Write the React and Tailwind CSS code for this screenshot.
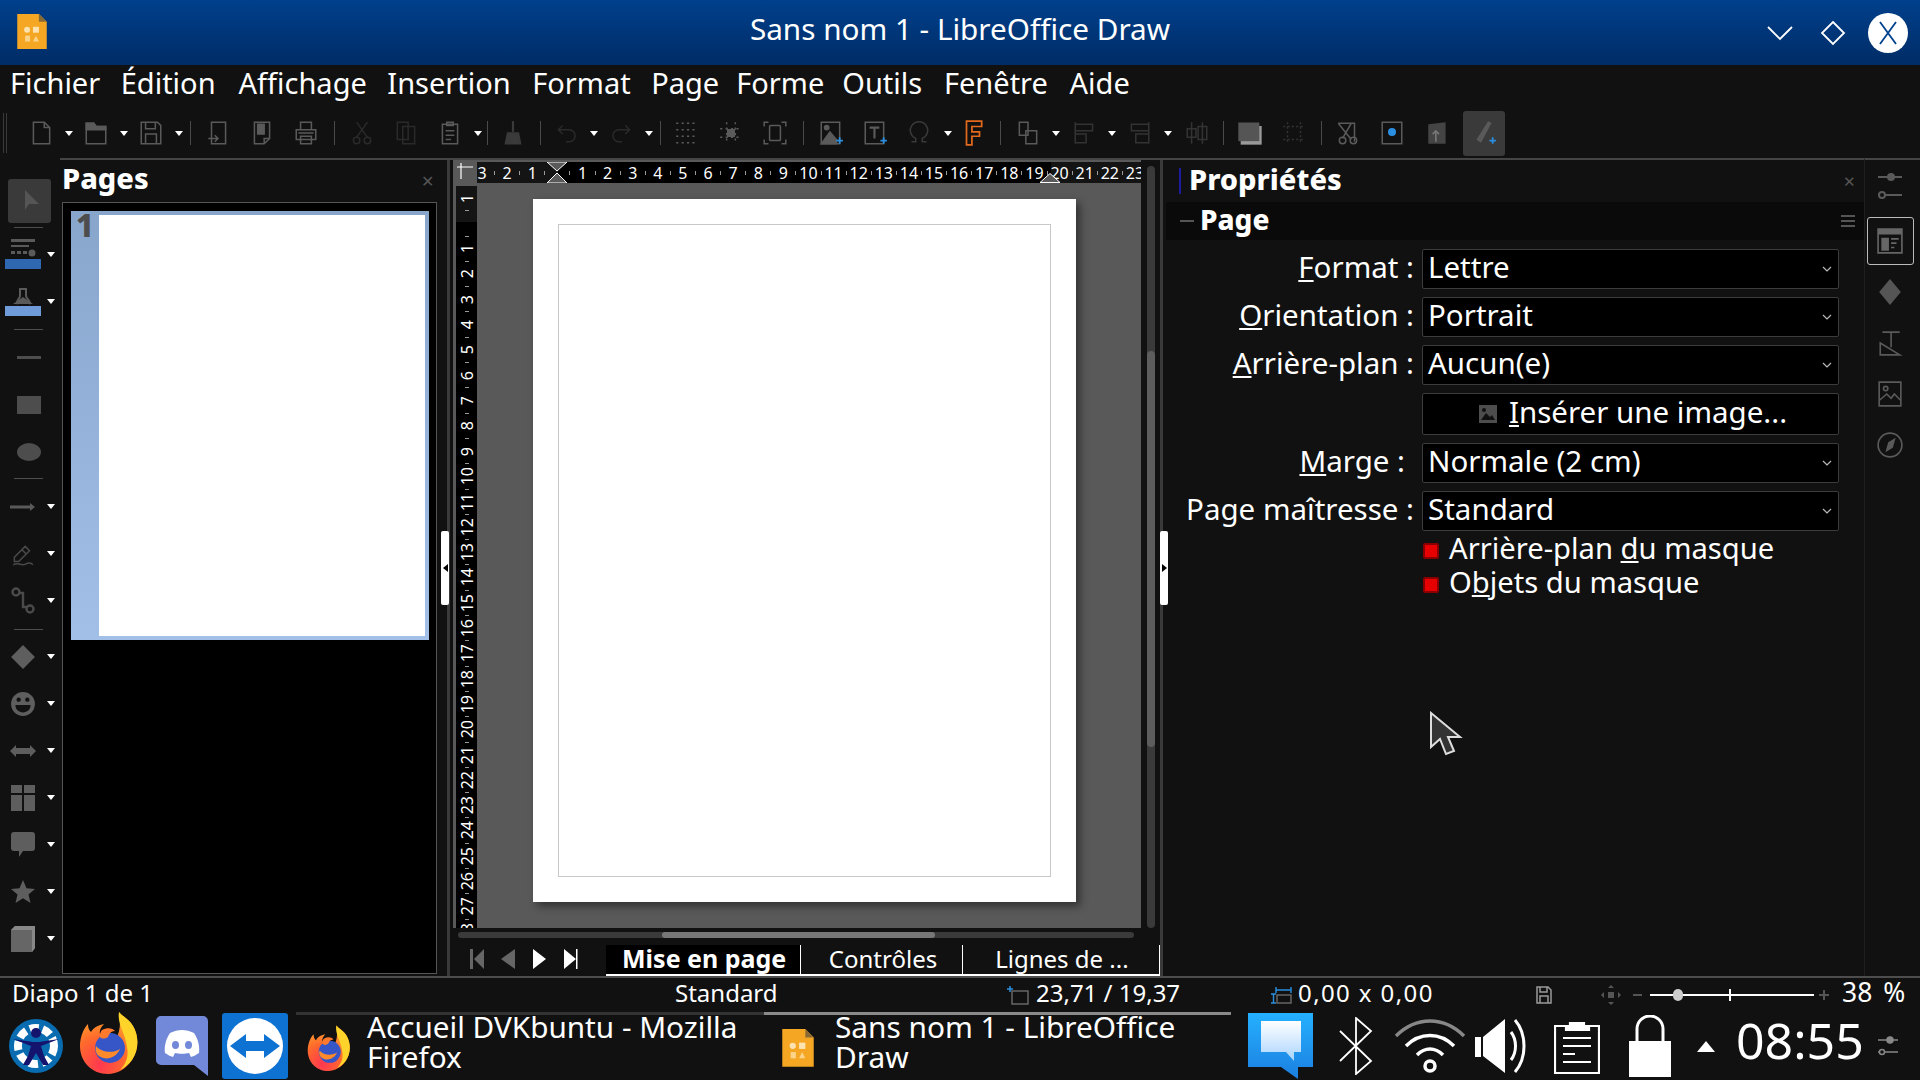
import React from 'react';

const DIM = '#5a5a5a';

// small helper for all the greyed out LibreOffice icons
const Ico = ({ w = 26, h = 26, children, c = DIM }) => (
  <svg width={w} height={h} viewBox="0 0 24 24" fill="none" stroke={c} strokeWidth="1.4">
    {children}
  </svg>
);

const Caret = ({ className = 'w-[11px]' }) => (
  <div className={`${className} flex justify-center shrink-0`}>
    <div className="w-0 h-0 border-l-[4px] border-r-[4px] border-t-[5px] border-l-transparent border-r-transparent border-t-white" />
  </div>
);

const Sep = ({ className = 'w-[12px]' }) => (
  <div className={`${className} flex justify-center shrink-0`}>
    <div className="w-px h-6 bg-[#4a4a4a]" />
  </div>
);

const Tool = ({ className = 'w-11', children }) => (
  <div className={`${className} flex justify-center items-center shrink-0`}>{children}</div>
);

const Plus = () => <path d="M17 19h6M20 16v6" stroke="#2a8fe0" strokeWidth="1.6" />;

const DrawLogo = ({ size = 32 }) => (
  <svg width={size} height={size * 1.18} viewBox="0 0 30 36">
    <path d="M0 0h22l8 8v28H0z" fill="#f5a623" />
    <path d="M22 0l8 8h-8z" fill="#8a6a33" />
    <rect x="7" y="13" width="6" height="6" rx="3" fill="#fde3b0" />
    <rect x="16" y="13" width="6" height="6" fill="#fde3b0" />
    <rect x="8" y="22" width="5" height="6" fill="#fbd48a" />
    <path d="M19 22l3 6h-6z" fill="#fbd48a" />
  </svg>
);

const Firefox = ({ size = 60, id = 'a' }) => (
  <svg width={size} height={size * 1.1} viewBox="0 0 60 66">
    <defs>
      <radialGradient id={`ff${id}`} cx="0.35" cy="0.85" r="0.9">
        <stop offset="0" stopColor="#ff3750" />
        <stop offset="0.5" stopColor="#ff6a2c" />
        <stop offset="1" stopColor="#ffb52c" />
      </radialGradient>
    </defs>
    <path d="M40 2c4 5 10 7 14 14 6 10 6 24-1 34-6 9-15 14-24 14C13 64 1 52 1 36c0-8 3-17 8-22 0 4 1 6 3 8 3-5 8-7 13-8-3 3-5 7-4 10 6-2 14 0 16 5 4-7 5-16 3-27z" fill={`url(#ff${id})`} />
    <path d="M40 2c4 5 10 7 14 14 6 10 6 24-1 34-3 4-8 8-12 10 6-6 9-14 7-23C46 22 38 14 40 2z" fill="#ffd42a" />
    <ellipse cx="31" cy="38" rx="15" ry="15" fill="#3656c8" />
    <path d="M17 36c5 6 16 8 24 3-4 9-14 12-21 7-3-2-4-6-3-10z" fill="#ff8a2c" />
    <path d="M23 20c5-3 11-2 13 1-4 0-6 3-7 6-3 2-6 2-8 0 0-3 0-5 2-7z" fill="#ff7a2c" />
  </svg>
);

// left margins differ per item, the hinted menu font doesn't space evenly
const menus = [
  ['Fichier', 'ml-0'],
  ['Édition', 'ml-[20.5px]'],
  ['Affichage', 'ml-[23px]'],
  ['Insertion', 'ml-[20.5px]'],
  ['Format', 'ml-[21.5px]'],
  ['Page', 'ml-[20.5px]'],
  ['Forme', 'ml-[17px]'],
  ['Outils', 'ml-[18px]'],
  ['Fenêtre', 'ml-[21.8px]'],
  ['Aide', 'ml-[21.7px]'],
];

const TitleBar = () => (
  <div className="h-[65px] shrink-0 flex items-center bg-gradient-to-b from-[#00408c] to-[#002c66] relative">
    <div className="pl-[17px] -mt-[2px]"><DrawLogo size={30} /></div>
    <div className="absolute left-0 right-0 text-center text-white text-[29.7px] leading-none -mt-[7px]">
      Sans nom 1 - LibreOffice Draw
    </div>
    <div className="ml-auto flex items-center pr-[12px]">
      <svg width="26" height="16" viewBox="0 0 26 16" fill="none" stroke="white" strokeWidth="1.8"><path d="M1 2l12 12L25 2" /></svg>
      <svg className="ml-[27px]" width="26" height="26" viewBox="0 0 26 26" fill="none" stroke="white" strokeWidth="1.8"><path d="M13 2l11 11-11 11L2 13z" /></svg>
      <div className="ml-[22px] w-[40px] h-[40px] rounded-full bg-white flex items-center justify-center">
        <svg width="24" height="26" viewBox="0 0 24 26" fill="none" stroke="#00408c" strokeWidth="1.8"><path d="M4 2l16 22M20 2L4 24" /></svg>
      </div>
    </div>
  </div>
);

const MenuBar = () => (
  <div className="h-[40px] shrink-0 flex items-center pl-[10px] text-white text-[29px] leading-none">
    {menus.map(([m, ml]) => <span key={m} className={`${ml} -mt-[6px]`}>{m}</span>)}
  </div>
);

const Toolbar = () => (
  <div className="h-[53px] shrink-0 flex items-center pt-[3px]">
    <div className="w-[19px] shrink-0 flex justify-start pl-[3px] gap-[2px]">
      <div className="w-px h-10 bg-[#3a3a3a]" /><div className="w-px h-10 bg-[#3a3a3a]" />
    </div>
    <Tool><Ico><path d="M5 2h10l5 5v15H5z" /><path d="M15 2v5h5" /></Ico></Tool>
    <Caret />
    <Tool><Ico><path d="M3 22V3h7l2 3h9v16z" /><path d="M3 3h7l2 3h9v3H3z" fill={DIM} /></Ico></Tool>
    <Caret />
    <Tool><Ico><path d="M3 2h15l3 3v17H3z" /><path d="M7 2v6h9V2M7 22v-9h10v9" /></Ico></Tool>
    <Caret />
    <Sep />
    <Tool><Ico><path d="M6 2h13v20H6z" /><path d="M3 17h9m-3-3l3 3-3 3" /></Ico></Tool>
    <Tool><Ico><path d="M5 2h14v15l-5 5H5z" /><path d="M8 4h6v9H8z" fill={DIM} /><path d="M14 22v-5h5" /></Ico></Tool>
    <Tool><Ico><path d="M7 2h10v7H7zM3 9h18v9H3zM7 15h10v7H7z" /><path d="M5 12h14" /></Ico></Tool>
    <Sep />
    <Tool><Ico c="#2a2a2a"><path d="M7 2l10 14M17 2L7 16" /><circle cx="7" cy="19" r="3" /><circle cx="17" cy="19" r="3" /></Ico></Tool>
    <Tool><Ico c="#2a2a2a"><path d="M4 2h10v16H4zM9 6h11v16H9z" /></Ico></Tool>
    <Tool><Ico><path d="M5 4h14v18H5z" /><path d="M9 2h6v3H9zM8 10h8M8 14h8M8 18h5" /></Ico></Tool>
    <Caret />
    <Sep className="w-[8px]" />
    <Tool><Ico c="#3a3a3a"><path d="M12 1v10" strokeWidth="2" /><path d="M7 12h10l2 10H5z" fill="#3a3a3a" /></Ico></Tool>
    <Sep className="w-[10px]" />
    <Tool><Ico c="#2a2a2a"><path d="M8 5L4 9l4 4M4 9h10a5 5 0 010 11h-3" /></Ico></Tool>
    <Caret className="w-[10px]" />
    <Tool><Ico c="#2a2a2a"><path d="M16 5l4 4-4 4M20 9H10a5 5 0 000 11h3" /></Ico></Tool>
    <Caret className="w-[12px]" />
    <Sep className="w-[10px]" />
    <Tool><Ico><path d="M2 3h20M2 9h20M2 15h20M2 21h20" strokeDasharray="2 3" /></Ico></Tool>
    <Tool><Ico><path d="M8 2v20M16 2v20M2 8h20M2 16h20" strokeDasharray="2 3" /><rect x="9" y="9" width="6" height="6" fill={DIM} /></Ico></Tool>
    <Tool><Ico><path d="M2 6V2h4M18 2h4v4M22 18v4h-4M6 22H2v-4" /><rect x="7" y="5" width="10" height="14" rx="1" /></Ico></Tool>
    <Sep />
    <Tool><Ico><path d="M3 2h17v20H3z" /><path d="M3 22l8-11 6 7v4z" fill={DIM} /><circle cx="8" cy="7" r="2" fill={DIM} /><Plus /></Ico></Tool>
    <Tool><Ico><path d="M3 2h17v20H3z" /><path d="M7 7h9M11.5 7v10" strokeWidth="2" /><Plus /></Ico></Tool>
    <Tool><Ico c="#3a3a3a"><path d="M5 20h4v-3a8 8 0 116 0v3h4" /></Ico></Tool>
    <Caret className="w-[14px]" />
    <Tool className="w-[36px]"><Ico c="#e36a1c"><path d="M6 1h14v5H11v5h7v4h-7v8H6z" strokeWidth="1.6" /></Ico></Tool>
    <Sep className="w-[18px]" />
    <Tool className="w-[38px]"><Ico><path d="M4 2h8v12H4zM10 10h10v12H10z" /></Ico></Tool>
    <Caret className="w-[18px]" />
    <Tool className="w-[40px]"><Ico c="#333"><path d="M3 2v20M3 4h16v6H3M3 13h10v8H3" /></Ico></Tool>
    <Caret className="w-[14px]" />
    <Tool className="w-[40px]"><Ico c="#333"><path d="M21 2v20M21 4H5v6h16M21 13H9v8h12" /></Ico></Tool>
    <Caret className="w-[18px]" />
    <Tool className="w-[40px]"><Ico c="#333"><path d="M7 2v20M17 2v20M3 8h8v8H3zM13 6h8v12h-8z" /></Ico></Tool>
    <Sep />
    <Tool className="w-[42px]"><svg width="28" height="28" viewBox="0 0 24 24"><rect x="4" y="6" width="18" height="16" fill="#999" /><rect x="2" y="3" width="18" height="16" fill="#555" /></svg></Tool>
    <Tool className="w-[46px]"><Ico c="#333"><path d="M6 2v20M18 2v20M2 6h20M2 18h20" strokeDasharray="2 2" /></Ico></Tool>
    <Sep className="w-[8px]" />
    <Tool className="w-[46px]"><Ico><path d="M3 3h15v17M3 3l12 15M15 3l-8 14" /><circle cx="7" cy="19" r="3" /><circle cx="17" cy="19" r="3" /></Ico></Tool>
    <Tool className="w-[42px]"><Ico><path d="M3 2h18v20H3z" /><circle cx="12" cy="11" r="3" fill="#2a8fe0" stroke="#2a8fe0" /></Ico></Tool>
    <Tool className="w-[50px]"><svg width="26" height="26" viewBox="0 0 24 24"><path d="M3 4l16-2v20H3z" fill="#444" /><path d="M10 20v-9M7 13l3-3 3 3" stroke="#777" fill="none" strokeWidth="1.5" /></svg></Tool>
    <div className="w-[42px] h-[45px] rounded-[3px] bg-[#3a3a3a] flex justify-center items-center">
      <Ico><path d="M6 18L16 2l2 1L9 20z" fill={DIM} /><Plus /></Ico>
    </div>
  </div>
);

const LeftSep = () => (
  <div className="w-[60px] flex justify-center -ml-[2px]"><div className="w-[29px] h-px bg-[#4d4d4d]" /></div>
);

const LeftTool = ({ children, caret = true }) => (
  <div className="h-[47px] w-[60px] flex items-center">
    <div className="w-[46px] flex justify-center">{children}</div>
    {caret && <Caret className="w-[10px]" />}
  </div>
);

const LeftToolbar = () => (
  <div className="w-[60px] shrink-0 flex flex-col pt-[21px]">
    <div className="ml-[8px] w-[43px] h-[44px] rounded-[3px] bg-[#3a3a3a] flex items-center justify-center">
      <svg width="22" height="26" viewBox="0 0 22 26"><path d="M6 2l14 14H10l-4 6z" fill="#555" /></svg>
    </div>
    <div className="h-[4px]" /><LeftSep /><div className="h-[3px]" />
    <LeftTool>
      <svg width="36" height="32" viewBox="0 0 36 32" fill={DIM}><rect x="6" y="0" width="24" height="3" /><rect x="6" y="6" width="18" height="2" /><rect x="6" y="12" width="4" height="3" /><rect x="12" y="12" width="4" height="3" /><rect x="18" y="12" width="4" height="3" /><circle cx="27" cy="14" r="3.5" /><rect x="0" y="20" width="36" height="10" fill="#2f67b0" /></svg>
    </LeftTool>
    <LeftTool>
      <svg width="36" height="32" viewBox="0 0 36 32"><path d="M13 18c-3-3 2-5 2-8V3h6v7c0 3 6 5 3 8" fill="none" stroke={DIM} strokeWidth="2" /><path d="M8 18l10-7 10 7z" fill={DIM} /><rect x="0" y="20" width="36" height="10" fill="#6f9cd8" /></svg>
    </LeftTool>
    <div className="h-[4px]" /><LeftSep /><div className="h-[4px]" />
    <LeftTool caret={false}><div className="w-[24px] h-[3px] bg-[#4d4d4d] ml-[12px]" /></LeftTool>
    <LeftTool caret={false}><div className="w-[24px] h-[18px] bg-[#4d4d4d] ml-[12px]" /></LeftTool>
    <LeftTool caret={false}><div className="w-[24px] h-[18px] rounded-[50%] bg-[#4d4d4d] ml-[12px]" /></LeftTool>
    <div className="h-[3px]" /><LeftSep /><div className="h-[4px]" />
    <LeftTool><svg width="26" height="10" viewBox="0 0 26 10"><path d="M0 5h22" stroke={DIM} strokeWidth="3" /><path d="M20 1l5 4-5 4z" fill={DIM} /></svg></LeftTool>
    <LeftTool><Ico c="#4a4a4a"><path d="M4 15L14 5l4 4L8 19H4zM3 22c5-3 8 2 12-1 2-1 5-1 6 1" /><path d="M11 8l4 4" /></Ico></LeftTool>
    <LeftTool><svg width="26" height="28" viewBox="0 0 26 28" fill="none" stroke="#4a4a4a" strokeWidth="2.4"><circle cx="6" cy="5" r="3.5" /><circle cx="20" cy="22" r="3.5" /><path d="M9 6h4v14h4" /></svg></LeftTool>
    <div className="h-[5px]" /><LeftSep /><div className="h-[3px]" />
    <LeftTool><svg width="26" height="26" viewBox="0 0 24 24"><path d="M12 1l11 11-11 11L1 12z" fill="#5e5e5e" /></svg></LeftTool>
    <LeftTool><svg width="26" height="26" viewBox="0 0 24 24"><circle cx="12" cy="12" r="11" fill="#5e5e5e" /><circle cx="8" cy="8" r="2" fill="#111" /><circle cx="16" cy="8" r="2" fill="#111" /><path d="M5 13h14c0 9-14 9-14 0z" fill="#111" /></svg></LeftTool>
    <LeftTool><svg width="26" height="14" viewBox="0 0 26 14"><path d="M0 7l6-6v3h14V1l6 6-6 6v-3H6v3z" fill="#5e5e5e" /></svg></LeftTool>
    <LeftTool><svg width="24" height="26" viewBox="0 0 24 26" fill="#5e5e5e"><rect width="11" height="8" /><rect x="13" width="11" height="8" /><rect y="10" width="11" height="16" /><rect x="13" y="10" width="11" height="16" /></svg></LeftTool>
    <LeftTool><svg width="24" height="26" viewBox="0 0 24 26"><path d="M3 0h18a3 3 0 013 3v13a3 3 0 01-3 3H12l-4 6v-6H3a3 3 0 01-3-3V3a3 3 0 013-3z" fill="#5e5e5e" /></svg></LeftTool>
    <LeftTool><svg width="24" height="24" viewBox="0 0 24 24"><path d="M12 0l3.5 8.2 8.5.7-6.5 5.6 2 8.5L12 18.3 4.500 23l2-8.500L0 8.900l8.500-.7z" fill="#5e5e5e" /></svg></LeftTool>
    <LeftTool><svg width="24" height="26" viewBox="0 0 24 26"><path d="M0 4l4-4h20v22l-3 4H0z" fill="#666" /><path d="M4 0h20v22l-3 4V4H0z" fill="#888" /></svg></LeftTool>
  </div>
);

const PagesPanel = () => (
  <div className="w-[383px] shrink-0 flex flex-col pl-[2px] pr-[6px] pb-[2px] border-t-2 border-[#454545]">
    <div className="h-[42px] shrink-0 flex items-center justify-between pr-[3px]">
      <span className="text-white text-[29px] font-extrabold leading-none -mt-[8px]">Pages</span>
      <span className="text-[#555] text-[16px] leading-none">✕</span>
    </div>
    <div className="flex-1 bg-black border border-[#555] pt-[8px] pl-[8px]">
      <div className="w-[358px] h-[429px] flex bg-gradient-to-b from-[#88a6cc] to-[#a2bfe8] pr-[4px] pt-[4px] pb-[4px]">
        <div className="w-[28px] shrink-0 text-[#4d4d4d] text-[32px] font-extrabold leading-none text-center -mt-[6px]">1</div>
        <div className="flex-1 bg-white" />
      </div>
    </div>
  </div>
);

const rulerH = [3, 2, 1, 0, 1, 2, 3, 4, 5, 6, 7, 8, 9, 10, 11, 12, 13, 14, 15, 16, 17, 18, 19, 20, 21, 22, 23];
const rulerV = [1, 0, 1, 2, 3, 4, 5, 6, 7, 8, 9, 10, 11, 12, 13, 14, 15, 16, 17, 18, 19, 20, 21, 22, 23, 24, 25, 26, 27, 28];

const HRuler = () => (
  <div className="h-[21px] w-[664px] overflow-hidden relative bg-[linear-gradient(to_right,#141414_81px,#000_81px,#000_574px,#141414_574px)]">
    <div className="flex h-full -ml-[7px] text-white text-[16px] leading-none">
      {rulerH.map((n, i) => (
        <div key={i} className="w-[25.11px] shrink-0 flex items-center">
          <span className="flex-1 text-center">{n === 0 ? '' : n}</span>
          <span className="w-px h-[4px] bg-[#999]" />
        </div>
      ))}
    </div>
    {/* margin handles */}
    <svg className="absolute left-[69px] top-0" width="22" height="21" viewBox="0 0 22 21" fill="#5a5a5a" stroke="white"><path d="M1 0l10 9L21 0zM1 21l10-10 10 10z" /></svg>
    <svg className="absolute left-[562px] top-[11px]" width="22" height="10" viewBox="0 0 22 10" fill="#5a5a5a" stroke="white"><path d="M1 9.500l10-9 10 9z" /></svg>
  </div>
);

const VRuler = () => (
  <div className="w-[21px] h-[742px] overflow-hidden mt-[3px] shrink-0 bg-[linear-gradient(to_bottom,#141414_36px,#000_36px)]">
    <div className="flex flex-col text-white text-[16px] leading-none">
      {rulerV.map((n, i) => (
        <div key={i} className="h-[25.3px] shrink-0 flex flex-col items-center">
          <div className="flex-1 flex items-center justify-center">
            <span className="[writing-mode:vertical-rl] rotate-180">{n === 0 ? '' : n}</span>
          </div>
          <span className="h-px w-[4px] bg-[#999]" />
        </div>
      ))}
    </div>
  </div>
);

const CenterPane = () => (
  <div className="w-[707px] shrink-0 flex flex-col border-t-2 border-[#454545]">
    <div className="flex-1 flex min-h-0">
      <div className="w-[688px] shrink-0 bg-[#595959] flex">
        <div className="w-[24px] shrink-0 flex flex-col items-start pl-[3px]">
          <svg className="mt-[1px] shrink-0" width="20" height="22" viewBox="0 0 20 22" stroke="white" strokeWidth="1.200"><path d="M1 6h16M5 2v16" /></svg>
          <VRuler />
        </div>
        <div className="flex-1 flex flex-col pt-[2px]">
          <HRuler />
          <div className="pl-[56px] pt-[16px]">
            <div className="w-[543px] h-[703px] bg-white p-[25px] shadow-[4px_4px_8px_rgba(0,0,0,0.45)]">
              <div className="w-full h-full border border-[#c8c8c8]" />
            </div>
          </div>
        </div>
      </div>
      <div className="flex-1 flex justify-center pt-[6px]">
        <div className="w-[8px] h-full rounded bg-[#3a3a3a] flex flex-col">
          <div className="h-[185px]" />
          <div className="h-[396px] bg-[#5c5c5c] rounded" />
        </div>
      </div>
    </div>
    <div className="h-[14px] shrink-0 flex items-center pl-[5px] bg-[#111]">
      <div className="w-[676px] h-[6px] rounded bg-[#3a3a3a] flex">
        <div className="w-[204px]" />
        <div className="w-[273px] rounded bg-[#777]" />
      </div>
    </div>
    <div className="h-[34px] shrink-0 flex items-end pl-[17px] leading-none">
      <svg width="136" height="24" viewBox="0 0 136 24" className="shrink-0 self-center">
        <path d="M0 2h3v20H0zM14 2v20L4 12z" fill="#666" />
        <path d="M45 2v20L31 12z" fill="#666" />
        <path d="M63 2v20l13-10z" fill="white" />
        <path d="M94 2v20l12-10z" fill="white" /><path d="M106 2h1.500v20H106z" fill="white" />
      </svg>
      <div className="w-[196px] h-[31px] bg-black border-b-2 border-r border-white text-[25px] text-white font-bold flex items-center justify-center pl-[2px]"><span className="-mt-[2px]">Mise en page</span></div>
      <div className="w-[162px] h-[31px] border-b-2 border-r border-white text-[24px] text-white flex items-center justify-center pl-[3px]"><span className="-mt-[2px]">Contrôles</span></div>
      <div className="w-[198px] h-[31px] border-b-2 border-r border-white text-[24px] text-white flex items-center justify-center pl-[2px]"><span className="-mt-[2px]">Lignes de ...</span></div>
    </div>
  </div>
);

const Select = ({ value }) => (
  <div className="h-[40px] bg-black border border-[#3c3c3c] rounded-[2px] flex items-center pl-[5px] pr-[6px] text-white">
    <span className="flex-1 -mt-[5px]">{value}</span>
    <svg width="10" height="7" viewBox="0 0 10 7" fill="none" stroke="#bbb" strokeWidth="1.200"><path d="M1 1l4 4 4-4" /></svg>
  </div>
);

const Check = ({ children }) => (
  <div className="flex items-center gap-[10px] h-[34px]">
    <div className="w-[16px] h-[16px] bg-[#e60000] border-2 border-[#8a0000] rounded-[2px] ml-[1px] shrink-0" />
    <span className="text-white text-[29.2px] -mt-[4px]">{children}</span>
  </div>
);

const PropertiesPanel = () => (
  <div className="flex-1 min-w-0 flex flex-col border-t-2 border-[#454545] pl-[3px] border-r border-r-[#1e1e1e] text-[29.5px] leading-none">
    <div className="h-[42px] shrink-0 flex items-center pl-[13px] pr-[8px]">
      <div className="w-[2px] h-[26px] bg-[#1c1c9c] mr-[8px]" />
      <span className="text-white font-extrabold flex-1 text-[29px] -mt-[5px]">Propriétés</span>
      <span className="text-[#555] text-[15px]">✕</span>
    </div>
    <div className="h-[38px] shrink-0 bg-[#0a0a0a] flex items-center pl-[14px] pr-[9px]">
      <div className="w-[14px] h-[2px] bg-[#555] mr-[6px]" />
      <span className="text-white font-extrabold flex-1 text-[28px] -mt-[4px]">Page</span>
      <div className="w-[14px] h-[12px] border-t-2 border-b-2 border-[#555] flex items-center"><div className="w-full h-[2px] bg-[#555]" /></div>
    </div>
    <div className="grid grid-cols-[251px_417px] gap-y-[8px] items-center pt-[9px] text-white pl-[5px]">
      <div className="text-right pr-[8px] -mt-[5px]"><u>F</u>ormat :</div>
      <Select value="Lettre" />
      <div className="text-right pr-[8px] -mt-[5px]"><u>O</u>rientation :</div>
      <Select value="Portrait" />
      <div className="text-right pr-[8px] -mt-[5px]"><u>A</u>rrière-plan :</div>
      <Select value="Aucun(e)" />
      <div />
      <div className="h-[42px] bg-black border border-[#3c3c3c] rounded-[2px] flex items-center justify-center gap-[12px] pl-[5px]">
        <svg width="18" height="18" viewBox="0 0 18 18"><rect width="18" height="18" fill="#4d4d4d" /><path d="M2 15l5-7 4 4 2-2 3 5z" fill="#111" /><circle cx="5" cy="5" r="2" fill="#111" /></svg>
        <span className="-mt-[5px]"><u>I</u>nsérer une image...</span>
      </div>
      <div className="text-right pr-[17px] -mt-[5px]"><u>M</u>arge :</div>
      <Select value="Normale (2 cm)" />
      <div className="text-right pr-[8px] -mt-[5px]">Page maîtresse :</div>
      <Select value="Standard" />
      <div />
      <div className="flex flex-col -mt-[5px]">
        <Check>Arrière-plan <u>d</u>u masque</Check>
        <Check>O<u>b</u>jets du masque</Check>
      </div>
    </div>
  </div>
);

const SideTabs = () => (
  <div className="w-[55px] shrink-0 flex flex-col items-center border-t-2 border-[#454545] pt-[7px] pr-[5px]">
    <svg width="26" height="36" viewBox="0 0 26 36" stroke={DIM} strokeWidth="2" fill="none"><path d="M1 10h24M1 28h24" /><circle cx="14" cy="10" r="3" fill={DIM} /><circle cx="5" cy="28" r="3" fill="#111" /></svg>
    <div className="w-[47px] h-[48px] mt-[14px] rounded-[3px] border border-[#bbb] flex items-center justify-center">
      <svg width="26" height="26" viewBox="0 0 24 24"><path d="M1 1h22v22H1z" fill="none" stroke="#666" strokeWidth="1.500" /><rect x="1" y="1" width="22" height="5" fill="#666" /><rect x="4" y="9" width="7" height="12" fill="#666" /><path d="M13 10h7M13 14h5M13 18h3" stroke="#666" strokeWidth="1.500" /></svg>
    </div>
    <svg className="mt-[14px]" width="26" height="26" viewBox="0 0 24 24"><path d="M12 0l10 12-10 12L2 12z" fill="#555" /></svg>
    <svg className="mt-[25px]" width="26" height="26" viewBox="0 0 24 24" fill="none" stroke={DIM} strokeWidth="1.500"><path d="M5 2h16M13 2v14M3 12v11h18z" /></svg>
    <svg className="mt-[25px]" width="26" height="26" viewBox="0 0 24 24" fill="none" stroke={DIM} strokeWidth="1.500"><path d="M2 1h20v22H2z" /><circle cx="8" cy="7" r="2" /><path d="M2 18l7-6 4 4 3-4 6 6" /></svg>
    <svg className="mt-[25px]" width="26" height="26" viewBox="0 0 24 24" fill="none" stroke={DIM} strokeWidth="1.500"><circle cx="12" cy="12" r="11" /><path d="M9 17l2-7 5-3-2 7z" fill={DIM} /></svg>
  </div>
);

const StatusBar = () => (
  <div className="h-[36px] shrink-0 border-t-2 border-[#4d4d4d] flex items-center text-white text-[24px] leading-none">
    <span className="w-[675px] pl-[12px] shrink-0 -mt-[5px]">Diapo 1 de 1</span>
    <span className="w-[331px] shrink-0 -mt-[5px]">Standard</span>
    <div className="w-[264px] shrink-0 flex items-center gap-[6px]">
      <svg width="24" height="20" viewBox="0 0 24 20" fill="none"><path d="M1 4h6M4 1v6" stroke="#2a8fe0" strokeWidth="1.500" /><rect x="6" y="6" width="16" height="13" stroke="#666" strokeWidth="1.500" /></svg>
      <span className="-mt-[5px]">23,71 / 19,37</span>
    </div>
    <div className="w-[266px] shrink-0 flex items-center gap-[6px]">
      <svg width="22" height="20" viewBox="0 0 22 20" fill="none"><path d="M6 2v6M6 5h15M21 2v6" stroke="#2a8fe0" strokeWidth="1.400" /><path d="M1 9h5M1 18h5M3.500 9v9" stroke="#2a8fe0" strokeWidth="1.400" /><rect x="7" y="10" width="14" height="8" stroke="#666" strokeWidth="1.500" /></svg>
      <span className="-mt-[5px] tracking-[1.4px]">0,00 x 0,00</span>
    </div>
    <svg className="shrink-0" width="16" height="18" viewBox="0 0 16 18" fill="none" stroke="#999" strokeWidth="1.500"><path d="M1 1h11l3 3v13H1zM4 1v5h7V1M4 17v-7h8v7" /></svg>
    <svg className="shrink-0 ml-[49px]" width="20" height="20" viewBox="0 0 20 20" fill="#555"><path d="M10 0l3 3H7zM10 20l-3-3h6zM0 10l3-3v6zM20 10l-3 3V7z" /><rect x="7" y="7" width="6" height="6" /></svg>
    <div className="w-[9px] h-[2px] bg-[#555] shrink-0 ml-[12px]" />
    <div className="relative w-[164px] h-[2px] bg-white shrink-0 ml-[8px]">
      <div className="absolute left-[23px] -top-[5px] w-[10px] h-[12px] rounded-full bg-[#ccc]" />
      <div className="absolute left-[79px] -top-[5px] w-[2px] h-[12px] bg-white" />
    </div>
    <svg className="shrink-0 ml-[5px]" width="10" height="12" viewBox="0 0 10 12" stroke="#555" strokeWidth="2"><path d="M0 6h10M5 1v10" /></svg>
    <span className="ml-[13px] shrink-0 whitespace-nowrap -mt-[5px] text-[26.5px] [word-spacing:4px]">38 %</span>
  </div>
);

const Launcher = () => (
  <svg width="56" height="58" viewBox="0 0 56 58" className="shrink-0">
    <circle cx="28" cy="29" r="27" fill="#0a6cb0" />
    <circle cx="28" cy="29" r="18" fill="none" stroke="white" strokeWidth="8" strokeDasharray="9 4" />
    <path d="M5 22l20 3 6 0 20-3-18 7 3 10 5 9h-6l-7-12-7 12h-6l5-9 3-10z" fill="#14146e" />
    <circle cx="28" cy="16" r="5" fill="#14146e" />
  </svg>
);

const Taskbar = () => (
  <div className="h-[68px] shrink-0 flex items-center text-white">
    <div className="pl-[8px]"><Launcher /></div>
    <div className="ml-[15px] -mt-[6px]"><Firefox size={60} id="a" /></div>
    <svg className="ml-[17px] shrink-0" width="52" height="60" viewBox="0 0 52 60">
      <path d="M5 0h42a5 5 0 015 5v55L38 49H5a5 5 0 01-5-5V5a5 5 0 015-5z" fill="#7289da" />
      <path d="M14 17c8-4 16-4 24 0 4 6 6 13 5 20-3 2-5 3-8 4l-2-4c-4 1-10 1-14 0l-2 4c-3-1-5-2-8-4-1-7 1-14 5-20z" fill="white" />
      <ellipse cx="19.500" cy="29" rx="3.500" ry="4" fill="#7289da" /><ellipse cx="32.500" cy="29" rx="3.500" ry="4" fill="#7289da" />
    </svg>
    <div className="ml-[14px] w-[66px] h-[66px] rounded-[3px] bg-[#0e72d2] flex items-center justify-center shrink-0">
      <div className="w-[56px] h-[56px] rounded-full bg-white flex items-center justify-center">
        <svg width="50" height="24" viewBox="0 0 50 24" fill="#0e72d2"><path d="M0 12L16 0v7h18V0l16 12-16 12v-7H16v7z" /></svg>
      </div>
    </div>
    <div className="w-[468px] ml-[8px] self-stretch border-t-[3px] border-[#333] flex items-center gap-[16px] pl-[11px]">
      <div className="shrink-0 mt-[1px]"><Firefox size={44} id="b" /></div>
      <span className="text-[29.7px] leading-[30px] w-[390px] -mt-[11px]">Accueil DVKbuntu - Mozilla Firefox</span>
    </div>
    <div className="w-[467px] self-stretch border-t-[3px] border-[#8a8a8a] flex items-center gap-[21px] pl-[18px]">
      <div className="shrink-0 mt-[1px]"><DrawLogo size={32} /></div>
      <span className="text-[29.8px] leading-[30px] w-[380px] -mt-[11px]">Sans nom 1 - LibreOffice Draw</span>
    </div>
    <svg className="ml-[17px] shrink-0" width="66" height="66" viewBox="0 0 66 66">
      <defs><linearGradient id="nb" x1="0" y1="0" x2="0" y2="1"><stop offset="0" stopColor="#25b0ff" /><stop offset="1" stopColor="#1b7fe0" /></linearGradient>
      <linearGradient id="nw" x1="0" y1="0" x2="0" y2="1"><stop offset="0" stopColor="#fff" /><stop offset="1" stopColor="#a8d4ff" /></linearGradient></defs>
      <path d="M0 0h65v54H50v12L33 54H0z" fill="url(#nb)" />
      <path d="M13 8h40v31H46v9l-8-9H13z" fill="url(#nw)" />
    </svg>
    <svg className="ml-[25px] shrink-0" width="34" height="58" viewBox="0 0 34 58" fill="none" stroke="white" strokeWidth="1.800"><path d="M1 14l31 30-15 13V1l15 13L1 44" /></svg>
    <svg className="ml-[21px] shrink-0" width="72" height="56" viewBox="0 0 72 56" fill="none" strokeWidth="3.500"><path d="M2 18c20-20 48-20 68 0" stroke="#888" /><path d="M12 28c14-14 34-14 48 0" stroke="white" /><path d="M23 37c8-8 18-8 26 0" stroke="white" /><circle cx="36" cy="48" r="5" stroke="white" /></svg>
    <svg className="ml-[9px] shrink-0" width="56" height="56" viewBox="0 0 56 56" fill="white"><path d="M0 19h6v20H0zM8 19l22-18v54L8 38z" /><path d="M36 14c6 8 6 20 0 28M40 2c12 14 12 38 0 52" fill="none" stroke="white" strokeWidth="3" /></svg>
    <svg className="ml-[23px] shrink-0" width="46" height="56" viewBox="0 0 46 56" fill="none" stroke="white" strokeWidth="2.200"><path d="M1 8h44v47H1z" /><path d="M16 8V5h14v3h5v4H12V8z" fill="white" /><path d="M9 20h28M9 28h28M9 36h12M9 44h28" /></svg>
    <svg className="ml-[28px] shrink-0" width="44" height="62" viewBox="0 0 44 62"><path d="M9 27V14a13 13 0 0126 0v13" fill="none" stroke="white" strokeWidth="3" /><rect x="1" y="26" width="42" height="36" fill="white" /></svg>
    <div className="ml-[25px] shrink-0 w-0 h-0 border-l-[9px] border-r-[9px] border-b-[11px] border-l-transparent border-r-transparent border-b-white" />
    <span className="ml-[21px] text-[50px] leading-none -mt-[13px] shrink-0">08:55</span>
    <svg className="ml-[14px] shrink-0" width="20" height="22" viewBox="0 0 20 22" stroke="#888" strokeWidth="1.500" fill="none"><path d="M0 5h20M0 17h20" /><circle cx="12" cy="5" r="3" fill="#888" /><circle cx="4" cy="17" r="2.500" fill="#111" /></svg>
  </div>
);

export default function App() {
  return (
    <div className="relative w-[1920px] h-[1080px] overflow-hidden bg-[#111] flex flex-col [font-family:'Noto_Sans',sans-serif]">
      <TitleBar />
      <MenuBar />
      <Toolbar />
      <div className="flex-1 min-h-0 flex">
        <LeftToolbar />
        <PagesPanel />
        <div className="w-[10px] shrink-0 flex justify-center border-t-2 border-[#454545]"><div className="w-[3px] bg-[#3a3a3a]" /></div>
        <CenterPane />
        <div className="w-[3px] shrink-0 bg-[#3a3a3a] border-t-2 border-[#454545]" />
        <PropertiesPanel />
        <SideTabs />
      </div>
      <StatusBar />
      <Taskbar />
      {/* panel collapse handles and mouse pointer lie over the panels */}
      <div className="absolute left-[441px] top-[531px] w-[8px] h-[74px] bg-white flex items-center justify-center rounded-[2px]">
        <div className="w-0 h-0 border-t-[4px] border-b-[4px] border-r-[5px] border-t-transparent border-b-transparent border-r-black" />
      </div>
      <div className="absolute left-[1160px] top-[531px] w-[8px] h-[74px] bg-white flex items-center justify-center rounded-[2px]">
        <div className="w-0 h-0 border-t-[4px] border-b-[4px] border-l-[5px] border-t-transparent border-b-transparent border-l-black" />
      </div>
      <svg className="absolute left-[1429px] top-[711px]" width="34" height="46" viewBox="0 0 34 46">
        <path d="M2 2v34l9-8 6 15 8-3-6-14h12z" fill="#333" stroke="#ddd" strokeWidth="2" />
      </svg>
    </div>
  );
}
